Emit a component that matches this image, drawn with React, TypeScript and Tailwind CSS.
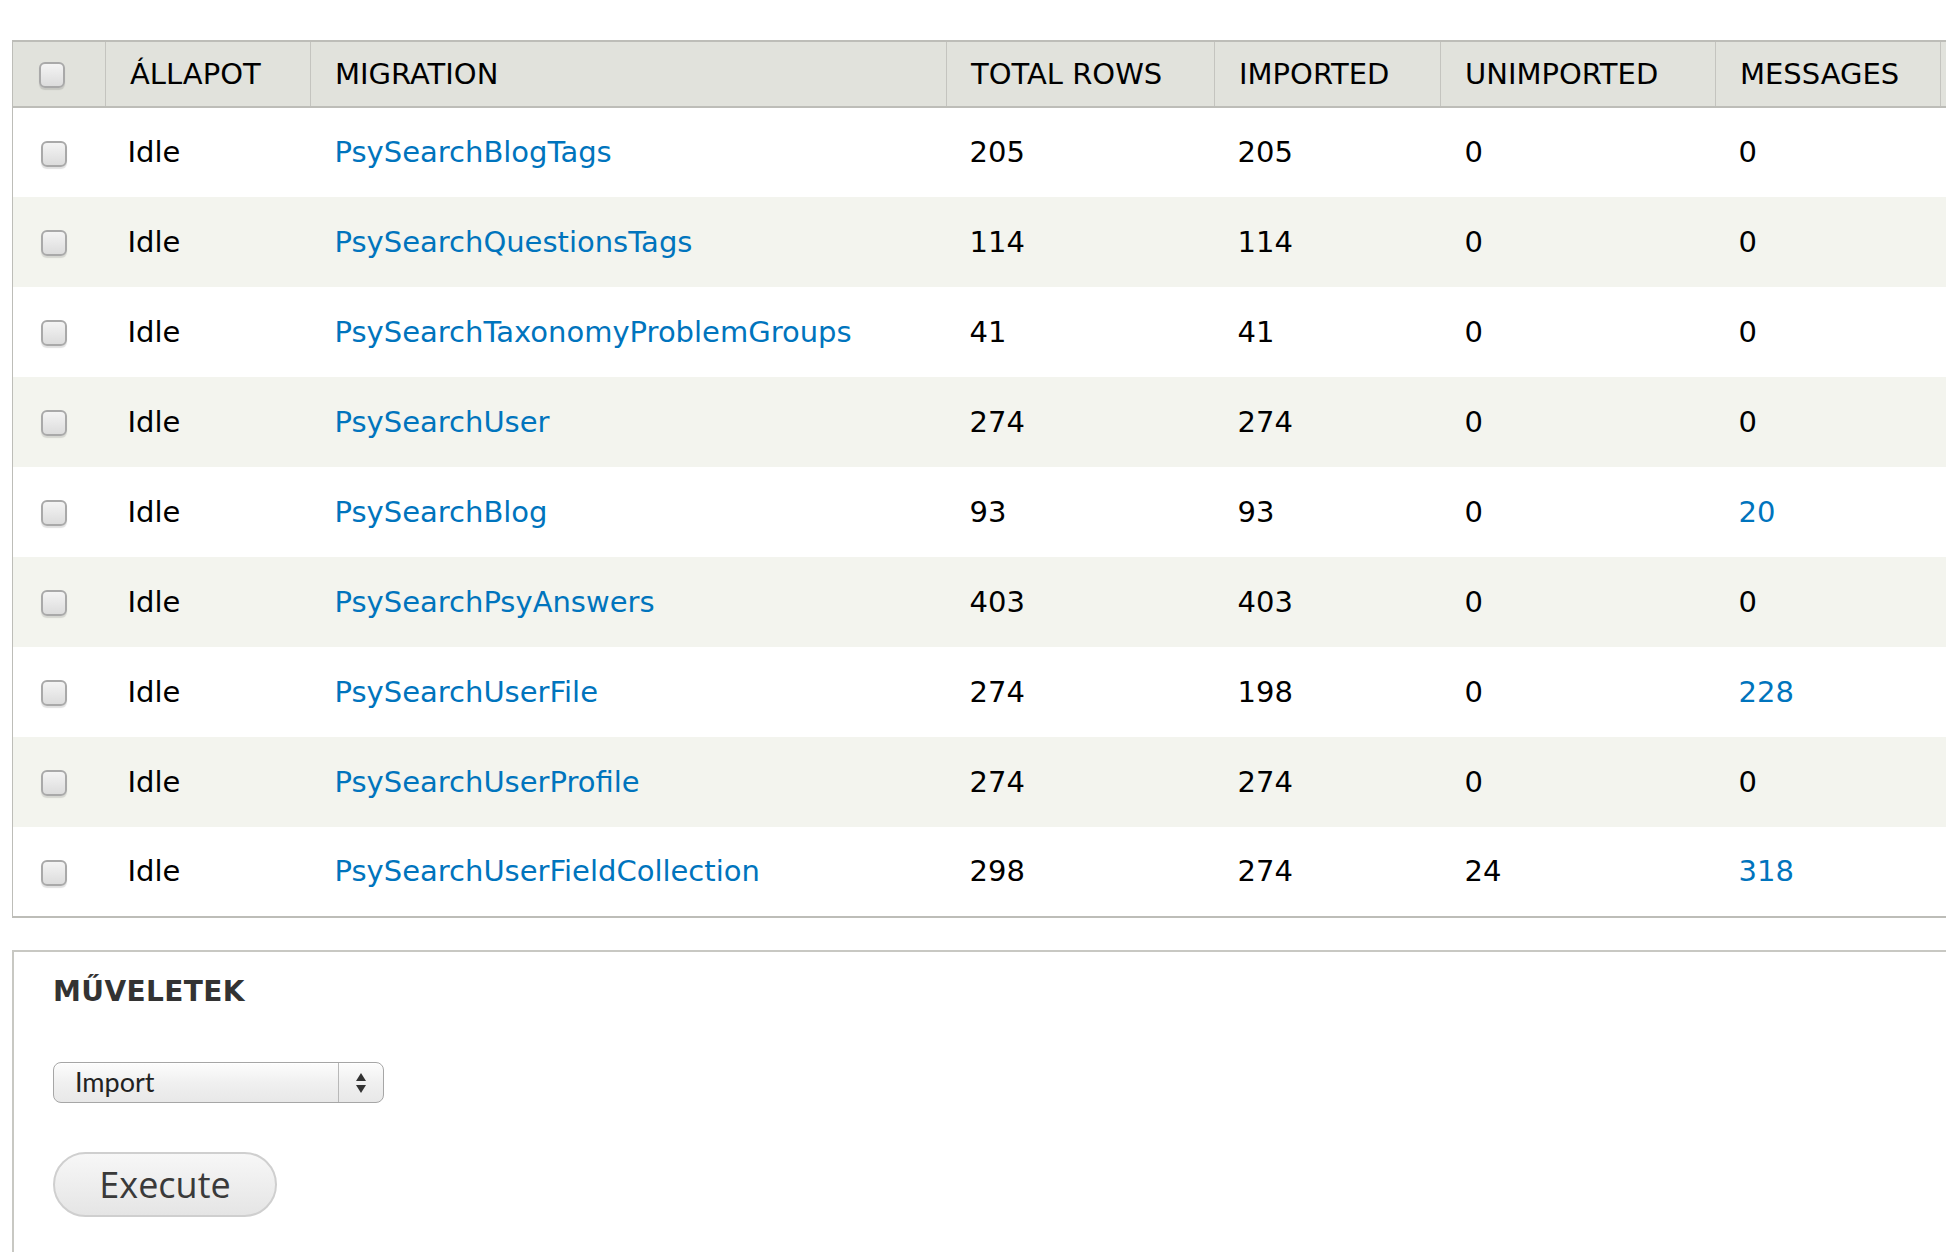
import React from "react";

type Row = {
  name: string;
  total: number;
  imported: number;
  unimported: number;
  messages: number;
};

const rows: Row[] = [
  { name: "PsySearchBlogTags", total: 205, imported: 205, unimported: 0, messages: 0 },
  { name: "PsySearchQuestionsTags", total: 114, imported: 114, unimported: 0, messages: 0 },
  { name: "PsySearchTaxonomyProblemGroups", total: 41, imported: 41, unimported: 0, messages: 0 },
  { name: "PsySearchUser", total: 274, imported: 274, unimported: 0, messages: 0 },
  { name: "PsySearchBlog", total: 93, imported: 93, unimported: 0, messages: 20 },
  { name: "PsySearchPsyAnswers", total: 403, imported: 403, unimported: 0, messages: 0 },
  { name: "PsySearchUserFile", total: 274, imported: 198, unimported: 0, messages: 228 },
  { name: "PsySearchUserProfile", total: 274, imported: 274, unimported: 0, messages: 0 },
  { name: "PsySearchUserFieldCollection", total: 298, imported: 274, unimported: 24, messages: 318 },
];

function Checkbox() {
  return (
    <span className="inline-block w-[26px] h-[26px] rounded-[6px] border-2 border-[#a9a9a9] bg-gradient-to-b from-[#f4f4f4] to-[#dcdcdc] shadow-[0_2px_1px_rgba(0,0,0,0.12)] align-middle" />
  );
}

const th =
  "h-[66px] px-[24px] pt-[2px] text-left font-normal border-l border-[#c4c4bf] align-middle";

export default function App() {
  return (
    <div className="w-[1946px] h-[1252px] overflow-hidden bg-white text-black font-['DejaVu_Sans',sans-serif] text-[29px]">
      <div className="pt-[40px] pl-[12px]">
        <table className="table-fixed border-collapse w-[2140px] border-l border-b-2 border-[#bdbdb8]">
          <colgroup>
            <col className="w-[93px]" />
            <col className="w-[205px]" />
            <col className="w-[636px]" />
            <col className="w-[268px]" />
            <col className="w-[226px]" />
            <col className="w-[275px]" />
            <col className="w-[225px]" />
            <col className="w-[212px]" />
          </colgroup>
          <thead>
            <tr className="bg-[#e1e2dc] border-t-2 border-b-2 border-[#bdbdb8] uppercase">
              <th className="h-[66px] align-middle text-left pl-[26px] font-normal">
                <Checkbox />
              </th>
              <th className={th}>Állapot</th>
              <th className={th}>Migration</th>
              <th className={th}>Total rows</th>
              <th className={th}>Imported</th>
              <th className={th}>Unimported</th>
              <th className={th}>Messages</th>
              <th className={th}>&nbsp;</th>
            </tr>
          </thead>
          <tbody>
            {rows.map((r, i) => (
              <tr key={r.name} className={i % 2 === 1 ? "bg-[#f3f4ee]" : "bg-white"}>
                <td className="h-[90px] pl-[28px] align-middle">
                  <Checkbox />
                </td>
                <td className="px-[22px] pt-[1px]">Idle</td>
                <td className="px-[24px] pt-[1px]">
                  <a href="#" className="text-[#0074bd]">{r.name}</a>
                </td>
                <td className="px-[23px] pt-[1px]">{r.total}</td>
                <td className="px-[23px] pt-[1px]">{r.imported}</td>
                <td className="px-[24px] pt-[1px]">{r.unimported}</td>
                <td className="px-[23px] pt-[1px]">
                  {r.messages > 0 ? (
                    <a href="#" className="text-[#0074bd]">{r.messages}</a>
                  ) : (
                    r.messages
                  )}
                </td>
                <td />
              </tr>
            ))}
          </tbody>
        </table>

        <fieldset className="mt-[32px] w-[2000px] h-[400px] border-l-2 border-t-2 border-[#c8c8c3] pl-[39px] pt-[19px]">
          <h2 className="font-bold text-[28px] text-[#333] uppercase tracking-[0.4px]">Műveletek</h2>
          <div className="mt-[49px] flex items-stretch w-[331px] h-[41px] rounded-[8px] border border-[#a6a6a6] bg-gradient-to-b from-[#fdfdfd] via-[#f0f0f0] to-[#e8e8e8] shadow-[inset_0_1px_0_#fff]">
            <span className="flex-1 flex items-center pl-[21px] text-[27px] text-[#222] font-['Lato','Open_Sans',sans-serif]">Import</span>
            <span className="w-[45px] border-l border-[#b8b8b8] flex items-center justify-center">
              <svg width="12" height="22" viewBox="0 0 12 22">
                <path d="M6 1 L11 9 L1 9 Z" fill="#333" />
                <path d="M6 21 L11 13 L1 13 Z" fill="#333" />
              </svg>
            </span>
          </div>
          <button className="mt-[49px] w-[224px] h-[65px] rounded-full border-2 border-[#cfcfcf] bg-gradient-to-b from-[#f7f7f7] to-[#e5e5e5] text-[36px] text-[#3a3a3a] font-['Open_Sans',sans-serif] flex items-center justify-center">
            Execute
          </button>
        </fieldset>
      </div>
    </div>
  );
}
